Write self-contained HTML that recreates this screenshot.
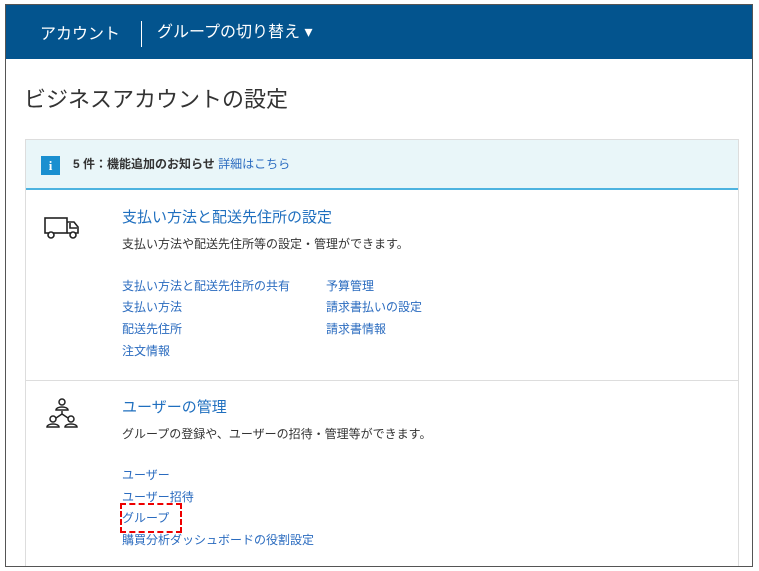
<!DOCTYPE html>
<html><head><meta charset="utf-8"><style>
*{margin:0;padding:0;box-sizing:border-box}
body{width:759px;height:571px;background:#fff;font-family:"Liberation Sans","Noto Sans CJK JP",sans-serif;position:relative;overflow:hidden}
.frame{position:absolute;left:5px;top:4px;width:748px;height:563px;border:1px solid #555;overflow:hidden;background:#fff}
.hdr{position:absolute;left:0;top:0;width:100%;height:54px;background:#03548e;color:#fff}
.hdr .a{position:absolute;left:34px;top:15px;font-size:16px}
.hdr .sep{position:absolute;left:135px;top:16px;width:1px;height:26px;background:#fff}
.hdr .g{position:absolute;left:151px;top:13px;font-size:16px}
h1{position:absolute;left:18px;top:77px;font-size:22px;font-weight:normal;color:#333}
.card{position:absolute;left:19px;top:134px;width:714px;height:440px;border:1px solid #ddd}
.notice{height:50px;background:#e9f6f9;border-bottom:2px solid #4db3e0;position:relative}
.ic{position:absolute;left:15px;top:16px;width:19px;height:19px;background:#1a8fd0;color:#fff;font-size:13px;font-weight:bold;text-align:center;line-height:19px;font-family:"Liberation Serif",serif}
.nt{position:absolute;left:47px;top:15px;font-size:12px;color:#333;font-weight:bold}
.nt span{color:#2a6bbf;font-weight:normal}
.t{position:absolute;left:96px;font-size:15px;color:#1f6fbf}
.d{position:absolute;left:96px;font-size:12px;color:#333}
.l{position:absolute;font-size:12px;color:#2a6bbf}
.div{position:absolute;left:0;top:240px;width:100%;height:1px;background:#ddd}
</style></head><body>
<div class="frame">
<div class="hdr"><div class="a">アカウント</div><div class="sep"></div><div class="g">グループの切り替え ▾</div></div>
<h1>ビジネスアカウントの設定</h1>
<div class="card">
<div class="notice"><div class="ic">i</div><div class="nt">5 件：機能追加のお知らせ <span>詳細はこちら</span></div></div>
<svg style="position:absolute;left:18px;top:76px" width="36" height="24" viewBox="0 0 36 24" fill="none" stroke="#222" stroke-width="1.6"><rect x="1" y="2" width="22" height="15"/><path d="M23 6h7l4 5v6H23"/><path d="M26 7v5h7"/><circle cx="7" cy="19" r="3" fill="#fff"/><circle cx="29" cy="19" r="3" fill="#fff"/></svg>
<div class="t" style="top:66px">支払い方法と配送先住所の設定</div>
<div class="d" style="top:95px">支払い方法や配送先住所等の設定・管理ができます。</div>
<div class="l" style="left:96px;top:137px">支払い方法と配送先住所の共有</div>
<div class="l" style="left:96px;top:158px">支払い方法</div>
<div class="l" style="left:96px;top:180px">配送先住所</div>
<div class="l" style="left:96px;top:202px">注文情報</div>
<div class="l" style="left:300px;top:137px">予算管理</div>
<div class="l" style="left:300px;top:158px">請求書払いの設定</div>
<div class="l" style="left:300px;top:180px">請求書情報</div>
<div class="div"></div>
<svg style="position:absolute;left:20px;top:258px" width="32" height="32" viewBox="0 0 32 32" fill="none" stroke="#222" stroke-width="1.5"><circle cx="16" cy="4" r="3"/><path d="M10 12c0-4 12-4 12 0z"/><path d="M16 13v3M16 16l-6 4M16 16l6 4"/><circle cx="7" cy="21" r="3"/><path d="M1 29c0-4 12-4 12 0z"/><circle cx="25" cy="21" r="3"/><path d="M19 29c0-4 12-4 12 0z"/></svg>
<div class="t" style="top:256px">ユーザーの管理</div>
<div class="d" style="top:285px">グループの登録や、ユーザーの招待・管理等ができます。</div>
<div class="l" style="left:96px;top:326px">ユーザー</div>
<div class="l" style="left:96px;top:348px">ユーザー招待</div>
<div class="l" style="left:96px;top:369px">グループ</div>
<div style="position:absolute;left:94px;top:363px;width:62px;height:30px;border:2px dashed #e00"></div>
<div class="l" style="left:96px;top:391px">購買分析ダッシュボードの役割設定</div>
</div>
</div>
</body></html>
